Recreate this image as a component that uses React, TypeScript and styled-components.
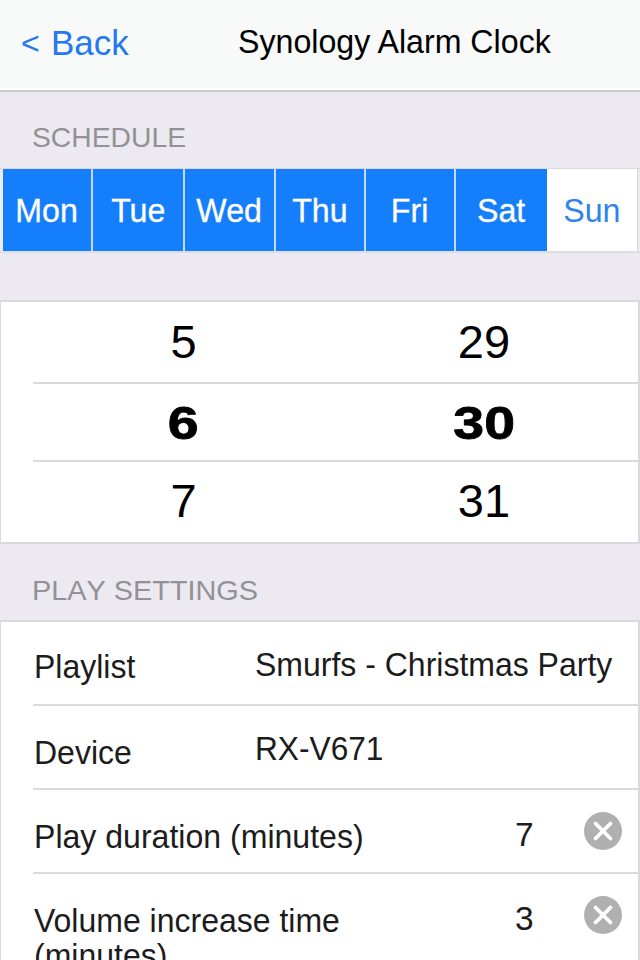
import React from "react";
import styled, { createGlobalStyle } from "styled-components";

const Global = createGlobalStyle`
  * { box-sizing: border-box; }
  body { margin: 0; background: #ece9f1; overflow: hidden; }
`;

const Screen = styled.main`
  width: 640px;
  height: 960px;
  overflow: hidden;
  background: #ece9f1;
  color: #1c1c1c;
  font: 33.5px/38px "Liberation Sans", Arial, sans-serif;
`;

/* Text whose horizontal proportion can be tuned. */
const Glyphs = styled.span<{ $x?: number; $origin?: string }>`
  display: inline-block;
  white-space: nowrap;
  transform: scaleX(${(p) => p.$x ?? 1});
  transform-origin: ${(p) => p.$origin ?? "left"} center;
`;

const NavBar = styled.header`
  display: flex;
  height: 92px;
  padding-left: 21px;
  background: #f8faf9;
  border-bottom: 2px solid #cbcbcd;
  box-shadow: inset 0 -2px #fdfefe;
`;

const BackButton = styled.button`
  display: flex;
  gap: 12px;
  width: 217px;
  padding: 24px 0 0;
  border: 0;
  background: none;
  color: #2478f0;
  font: 35px/38px "Liberation Sans", Arial, sans-serif;
  text-align: left;
  align-self: flex-start;
`;

const Chevron = styled.span`
  width: 18px;
  font-size: 32px;
`;

const Title = styled.h1`
  margin: 0;
  padding-top: 23px;
  color: #000;
  font-size: 33.5px;
  font-weight: 400;
`;

const SectionLabel = styled.h2<{ $height: number; $top?: number }>`
  height: ${(p) => p.$height}px;
  margin: 0;
  padding: ${(p) => p.$top ?? 30}px 0 0 32px;
  color: #929196;
  font-size: 28px;
  line-height: 32px;
  font-weight: 400;
  font-kerning: none;
`;

const Days = styled.div`
  display: grid;
  grid-template-columns: 90px 92px 91px 90px 90px 91px 91px;
  height: 85px;
  padding-left: 3px;
  border-top: 1px solid #dad8e0;
  border-bottom: 2px solid #dedce4;
`;

const Day = styled.button<{ $on: boolean }>`
  padding: 1px 0 0;
  border: 0;
  border-right: ${(p) => (p.$on ? "2px solid #c5d9f6" : "1px solid #dad8e0")};
  background: ${(p) => (p.$on ? "#157efb" : "#fff")};
  color: ${(p) => (p.$on ? "#fff" : "#2d83ec")};
  -webkit-text-stroke: ${(p) => (p.$on ? "0.3px #fff" : "0")};
  font: 33.5px/81px "Liberation Sans", Arial, sans-serif;
  text-align: center;
  &:nth-child(6) { border-right: 0; }
`;

const Panel = styled.section<{ $gap?: number; $h: number }>`
  height: ${(p) => p.$h}px;
  margin-top: ${(p) => p.$gap ?? 0}px;
  padding-left: 32px;
  background: #fff;
  border: 2px solid #dad9df;
  border-left-width: 1px;
`;

const PickerRow = styled.div<{ $h: number; $bold?: boolean }>`
  display: grid;
  grid-template-columns: 301px 300px;
  height: ${(p) => p.$h}px;
  color: #000;
  font-size: 47px;
  line-height: 79px;
  text-align: center;
  font-weight: ${(p) => (p.$bold ? 700 : 400)};
  -webkit-text-stroke: ${(p) => (p.$bold ? "0.8px #000" : "0")};
  & + & { border-top: 2px solid #dadadd; line-height: 78px; }
`;

const Setting = styled.div<{ $value: number; $first?: boolean; $numeric?: boolean }>`
  display: grid;
  grid-template-columns: ${(p) => p.$value}px 1fr auto;
  align-items: start;
  height: ${(p) => (p.$first ? 82 : 84)}px;
  padding-left: 1px;
  & > label { padding-top: ${(p) => (p.$first ? 27 : 29)}px; }
  & > output { padding-top: ${(p) => (p.$numeric ? 26 : 24)}px; }
  & + & { border-top: 2px solid #dadadf; }
`;

const Name = styled.label`
  line-height: 35px;
`;

const Value = styled.output``;

const Clear = styled.button`
  width: 38px;
  height: 38px;
  margin: 22px 16px 0 0;
  padding: 0;
  border: 0;
  background: none;
  svg { display: block; }
`;

const ClearIcon = () => (
  <Clear aria-label="Clear">
    <svg width="38" height="38" viewBox="0 0 38 38">
      <circle cx="19" cy="19" r="19" fill="#b0b0b0" />
      <path d="M11.5 11.5 26.5 26.5M26.5 11.5 11.5 26.5" stroke="#fff" strokeWidth="3.8" strokeLinecap="round" />
    </svg>
  </Clear>
);

const week = ["Mon", "Tue", "Wed", "Thu", "Fri", "Sat", "Sun"];

export default function App() {
  return (
    <Screen>
      <Global />
      <NavBar>
        <BackButton><Chevron>&lt;</Chevron><span>Back</span></BackButton>
        <Title><Glyphs $x={0.96}>Synology Alarm Clock</Glyphs></Title>
      </NavBar>
      <SectionLabel $height={76}><Glyphs $x={1.01}>SCHEDULE</Glyphs></SectionLabel>
      <Days>
        {week.map((d) => (
          <Day key={d} $on={d !== "Sun"}><Glyphs $x={0.96} $origin="center">{d}</Glyphs></Day>
        ))}
      </Days>
      <Panel $gap={47} $h={244}>
        <PickerRow $h={80}><span>5</span><span>29</span></PickerRow>
        <PickerRow $h={78} $bold>
          <span><Glyphs $x={1.18} $origin="center">6</Glyphs></span>
          <span><Glyphs $x={1.18} $origin="center">30</Glyphs></span>
        </PickerRow>
        <PickerRow $h={82}><span>7</span><span>31</span></PickerRow>
      </Panel>
      <SectionLabel $height={76} $top={31}><Glyphs $x={1.03}>PLAY SETTINGS</Glyphs></SectionLabel>
      <Panel $h={380}>
        <Setting $value={221} $first>
          <Name><Glyphs $x={0.955}>Playlist</Glyphs></Name>
          <Value><Glyphs $x={0.955}>Smurfs - Christmas Party</Glyphs></Value>
        </Setting>
        <Setting $value={221}>
          <Name><Glyphs $x={0.955}>Device</Glyphs></Name>
          <Value><Glyphs $x={0.945}>RX-V671</Glyphs></Value>
        </Setting>
        <Setting $value={481} $numeric>
          <Name><Glyphs $x={0.957}>Play duration (minutes)</Glyphs></Name>
          <Value>7</Value>
          <ClearIcon />
        </Setting>
        <Setting $value={481} $numeric>
          <Name><Glyphs $x={0.955}>Volume increase time<br />(minutes)</Glyphs></Name>
          <Value>3</Value>
          <ClearIcon />
        </Setting>
      </Panel>
    </Screen>
  );
}
